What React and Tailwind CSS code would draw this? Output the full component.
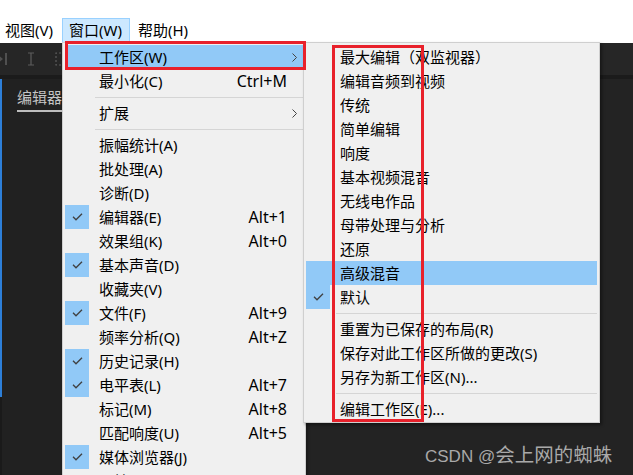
import React from 'react';

const mainItems = [
  { label: '工作区(W)', active: true, arrow: true },
  { label: '最小化(C)', shortcut: 'Ctrl+M' },
  { sep: true },
  { label: '扩展', arrow: true },
  { sep: true },
  { label: '振幅统计(A)' },
  { label: '批处理(A)' },
  { label: '诊断(D)' },
  { label: '编辑器(E)', shortcut: 'Alt+1', checked: true },
  { label: '效果组(K)', shortcut: 'Alt+0' },
  { label: '基本声音(D)', checked: true },
  { label: '收藏夹(V)' },
  { label: '文件(F)', shortcut: 'Alt+9', checked: true },
  { label: '频率分析(Q)', shortcut: 'Alt+Z' },
  { label: '历史记录(H)', checked: true },
  { label: '电平表(L)', shortcut: 'Alt+7', checked: true },
  { label: '标记(M)', shortcut: 'Alt+8' },
  { label: '匹配响度(U)', shortcut: 'Alt+5' },
  { label: '媒体浏览器(J)', checked: true },
  { label: '属性(P)', shortcut: 'Alt+3' },
];

const subItems = [
  { label: '最大编辑（双监视器）' },
  { label: '编辑音频到视频' },
  { label: '传统' },
  { label: '简单编辑' },
  { label: '响度' },
  { label: '基本视频混音' },
  { label: '无线电作品' },
  { label: '母带处理与分析' },
  { label: '还原' },
  { label: '高级混音', active: true },
  { label: '默认', checked: true },
  { sep: true },
  { label: '重置为已保存的布局(R)' },
  { label: '保存对此工作区所做的更改(S)' },
  { label: '另存为新工作区(N)...' },
  { sep: true },
  { label: '编辑工作区(E)...' },
];

const Check = () => (
  <svg width="11" height="8" viewBox="0 0 11 8" fill="none" stroke="#404040" strokeWidth="1.3">
    <path d="M1 3.8l3 3 6-6" />
  </svg>
);

const Chevron = () => (
  <svg width="5" height="9" viewBox="0 0 5 9" fill="none" stroke="#444" strokeWidth="1">
    <path d="M0.5 0.5l4 4-4 4" />
  </svg>
);

const MenuRow = ({ item }) => {
  if (item.sep) {
    return (
      <div className="h-[8px] flex items-center pl-[32px] pr-[2px]">
        <div className="h-px w-full bg-[#d5d5d5]" />
      </div>
    );
  }
  return (
    <div className={`mx-[2px] h-[24px] flex items-center ${item.active ? 'bg-[#91c9f7]' : ''}`}>
      <div className="w-[34px] h-[24px] shrink-0">
        {item.checked && (
          <div className="w-[24px] h-[24px] bg-[#91c9f7] flex items-center justify-center">
            <Check />
          </div>
        )}
      </div>
      <span className="flex-1 whitespace-nowrap">{item.label}</span>
      {item.shortcut && <span className="mr-[16px] text-[16px]">{item.shortcut}</span>}
      {item.arrow && <span className="mr-[6px] flex items-center"><Chevron /></span>}
    </div>
  );
};

export default function App() {
  return (
    <div className="relative w-[633px] h-[475px] overflow-hidden bg-[#232323] font-['Noto_Sans','Noto_Sans_CJK_SC',sans-serif] text-[15px] text-black">
      {/* menu bar */}
      <div className="h-[43px] bg-white flex items-start pt-[18px]">
        <div className="w-[62px] h-[24px] pl-[5px] flex items-center">视图(V)</div>
        <div className="w-[68px] h-[25px] pl-[6px] flex items-center bg-[#cce8ff] border border-[#99d1ff]">窗口(W)</div>
        <div className="h-[24px] pl-[8px] flex items-center">帮助(H)</div>
      </div>

      {/* dark app */}
      <div className="h-[32px] bg-[#262626] flex items-center">
        <svg width="10" height="14" viewBox="0 0 10 14">
          <path d="M-4 1l7 6-7 6z" fill="#505050" />
          <rect x="5" y="1" width="2" height="12" fill="#505050" />
        </svg>
        <svg width="10" height="14" viewBox="0 0 10 14" className="ml-[16px]" fill="none" stroke="#5c5c5c" strokeWidth="1.2">
          <path d="M2 1h6M5 1v12M2 13h6" />
        </svg>
        <svg width="10" height="14" viewBox="0 0 10 14" className="ml-[19px]" fill="none" stroke="#5c5c5c" strokeWidth="1.2" strokeDasharray="2 2">
          <path d="M6 1H1v12h5" />
        </svg>
      </div>
      <div className="h-[4px] bg-[#1b1b1b]" />
      <div className="flex">
        <div className="w-[62px] flex">
          <div className="w-[3px] bg-[#1a1a1a] flex justify-center">
            <div className="w-[2px] h-[318px] bg-[#2d7fd8]" />
          </div>
          <div className="w-[4px] bg-[#1a1a1a]" />
          <div className="flex-1 bg-[#212121] h-[400px] pl-[15px] pt-[8px]">
            <div className="text-[#c4c4c4] leading-[20px] whitespace-nowrap">编辑器</div>
            <div className="mt-[3px] h-[2px] bg-[#bdbdbd]" />
          </div>
        </div>
      </div>

      {/* main dropdown */}
      <div className="absolute left-[62px] top-[42px] w-[244px] h-[460px] bg-[#f0f0f0] border border-[#cfcfcf] pt-[2px] shadow-[2px_2px_3px_rgba(0,0,0,0.3)]">
        {mainItems.map((item, i) => <MenuRow key={i} item={item} />)}
      </div>

      {/* submenu */}
      <div className="absolute left-[303px] top-[42px] w-[297px] h-[381px] bg-[#f0f0f0] border border-[#cfcfcf] pt-[2px] shadow-[2px_2px_3px_rgba(0,0,0,0.4)]">
        {subItems.map((item, i) => <MenuRow key={i} item={item} />)}
      </div>

      {/* red annotation boxes */}
      <div className="absolute left-[65px] top-[41px] w-[241px] h-[29px] border-[3px] border-[#e8212b]" />
      <div className="absolute left-[332px] top-[45px] w-[92px] h-[377px] border-[3px] border-[#e8212b]" />

      {/* watermark */}
      <div className="absolute left-[425px] top-[443px] leading-[24px] text-[#a9a9a9] whitespace-nowrap font-['Liberation_Sans','Noto_Sans_CJK_SC',sans-serif]">
        <span className="text-[17px]">CSDN @</span>
        <span className="text-[19.5px]">会上网的蜘蛛</span>
      </div>
    </div>
  );
}
